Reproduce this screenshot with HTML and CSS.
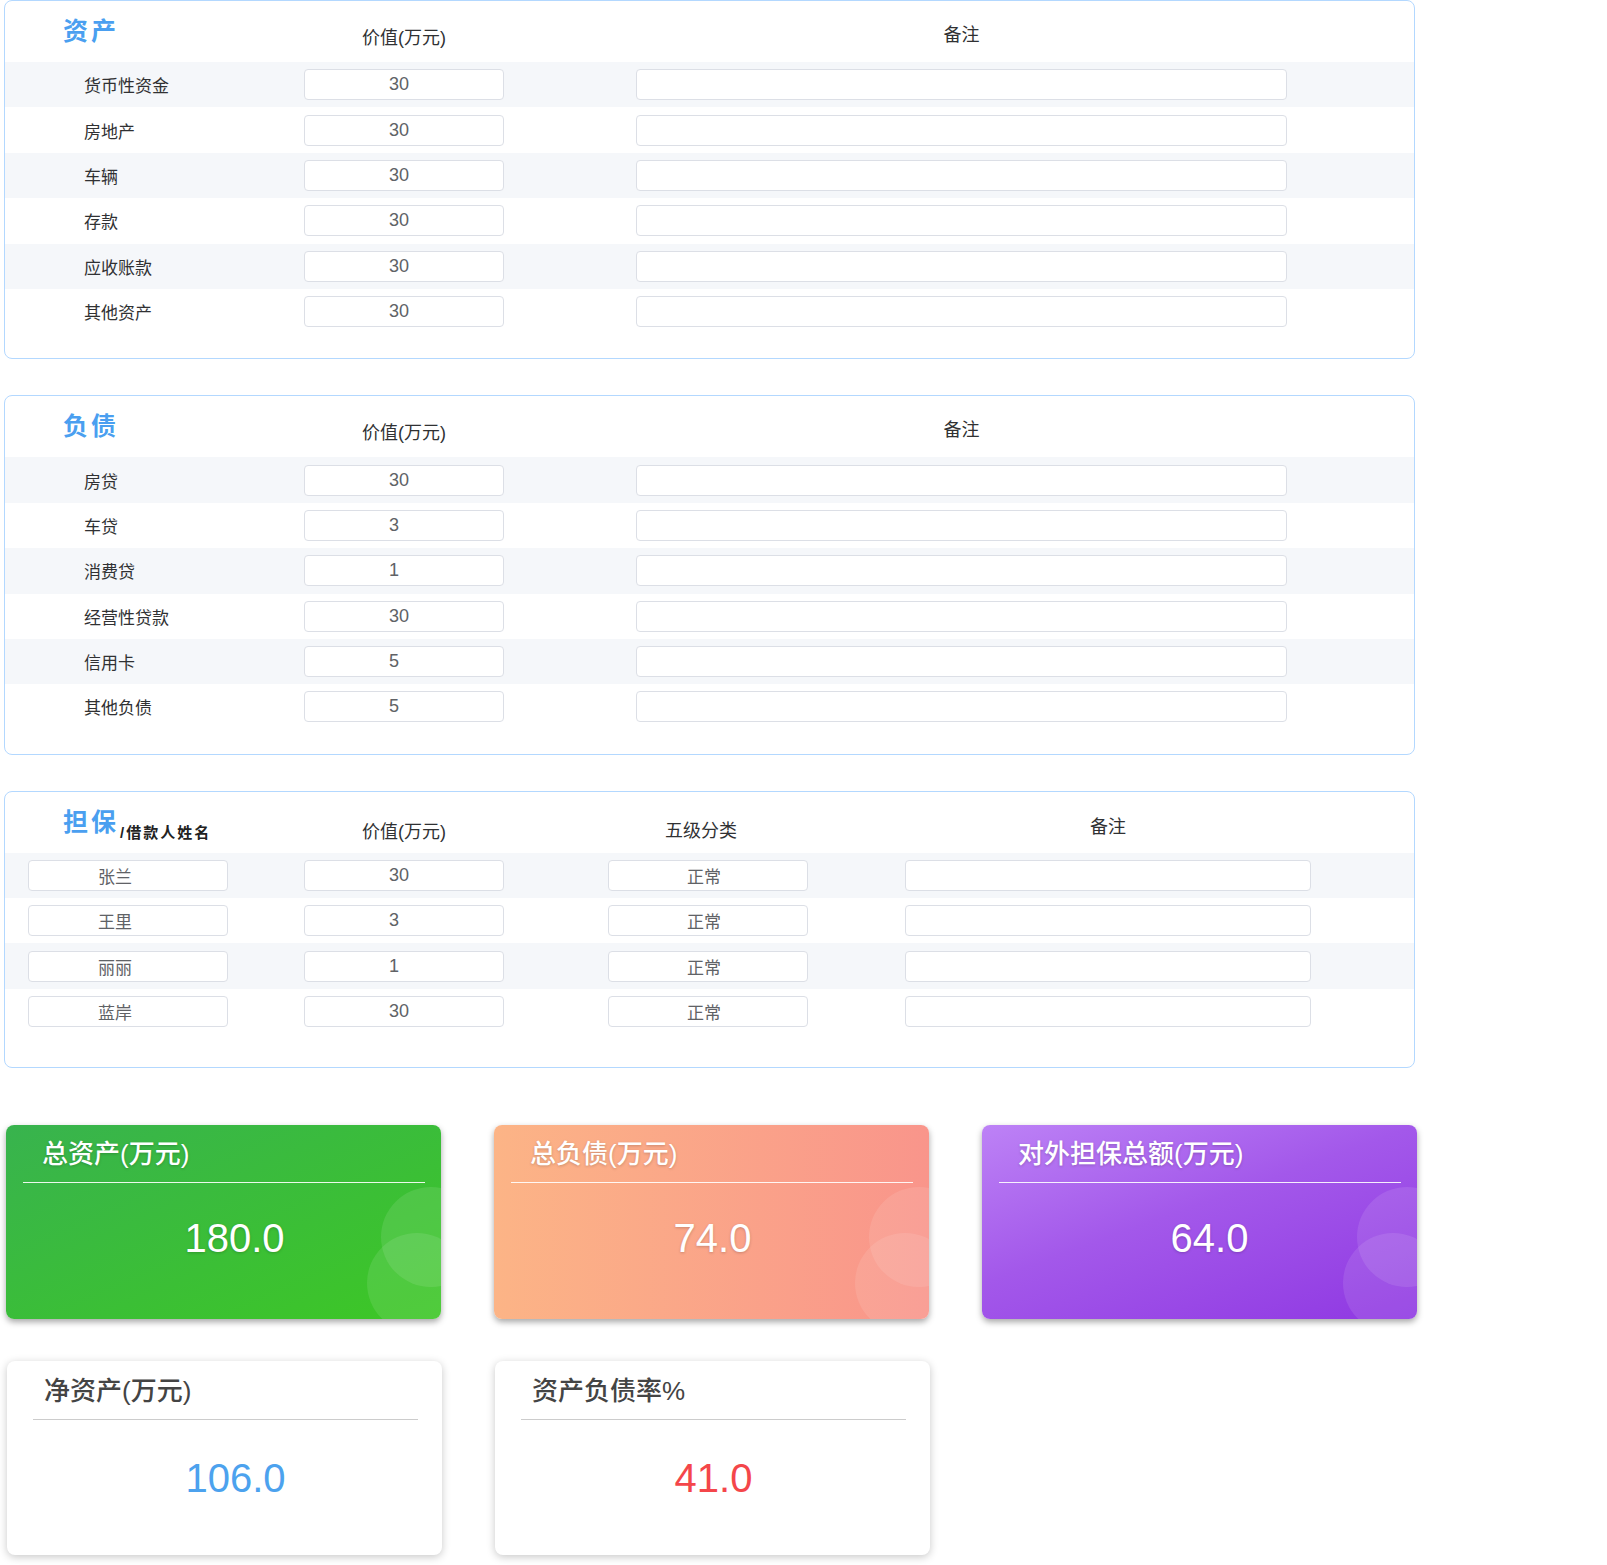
FILE: index.html
```html
<!DOCTYPE html>
<html>
  <head>
    <title>资产负债</title>
    <link rel="stylesheet" href="styles.css">
  </head>
  <body>
    <div class="page">
      <!-- 资产 -->
      <section class="panel">
        <div class="panel-head">
          <div class="panel-title">资产</div>
          <div class="col-head col-value">价值(万元)</div>
          <div class="col-head col-note">备注</div>
        </div>
        <div class="panel-row">
          <div class="row-label">货币性资金</div>
          <input class="field field-value" value="30">
          <input class="field field-note">
        </div>
        <div class="panel-row">
          <div class="row-label">房地产</div>
          <input class="field field-value" value="30">
          <input class="field field-note">
        </div>
        <div class="panel-row">
          <div class="row-label">车辆</div>
          <input class="field field-value" value="30">
          <input class="field field-note">
        </div>
        <div class="panel-row">
          <div class="row-label">存款</div>
          <input class="field field-value" value="30">
          <input class="field field-note">
        </div>
        <div class="panel-row">
          <div class="row-label">应收账款</div>
          <input class="field field-value" value="30">
          <input class="field field-note">
        </div>
        <div class="panel-row">
          <div class="row-label">其他资产</div>
          <input class="field field-value" value="30">
          <input class="field field-note">
        </div>
      </section>

      <!-- 负债 -->
      <section class="panel">
        <div class="panel-head">
          <div class="panel-title">负债</div>
          <div class="col-head col-value">价值(万元)</div>
          <div class="col-head col-note">备注</div>
        </div>
        <div class="panel-row">
          <div class="row-label">房贷</div>
          <input class="field field-value" value="30">
          <input class="field field-note">
        </div>
        <div class="panel-row">
          <div class="row-label">车贷</div>
          <input class="field field-value" value="3">
          <input class="field field-note">
        </div>
        <div class="panel-row">
          <div class="row-label">消费贷</div>
          <input class="field field-value" value="1">
          <input class="field field-note">
        </div>
        <div class="panel-row">
          <div class="row-label">经营性贷款</div>
          <input class="field field-value" value="30">
          <input class="field field-note">
        </div>
        <div class="panel-row">
          <div class="row-label">信用卡</div>
          <input class="field field-value" value="5">
          <input class="field field-note">
        </div>
        <div class="panel-row">
          <div class="row-label">其他负债</div>
          <input class="field field-value" value="5">
          <input class="field field-note">
        </div>
      </section>

      <!-- 担保 -->
      <section class="panel panel-guarantee">
        <div class="panel-head">
          <div class="panel-title">担保<span class="panel-sub">/借款人姓名</span></div>
          <div class="col-head col-value">价值(万元)</div>
          <div class="col-head col-grade">五级分类</div>
          <div class="col-head col-note">备注</div>
        </div>
        <div class="panel-row">
          <input class="field field-name" value="张兰">
          <input class="field field-value" value="30">
          <input class="field field-grade" value="正常">
          <input class="field field-note">
        </div>
        <div class="panel-row">
          <input class="field field-name" value="王里">
          <input class="field field-value" value="3">
          <input class="field field-grade" value="正常">
          <input class="field field-note">
        </div>
        <div class="panel-row">
          <input class="field field-name" value="丽丽">
          <input class="field field-value" value="1">
          <input class="field field-grade" value="正常">
          <input class="field field-note">
        </div>
        <div class="panel-row">
          <input class="field field-name" value="蓝岸">
          <input class="field field-value" value="30">
          <input class="field field-grade" value="正常">
          <input class="field field-note">
        </div>
      </section>

      <!-- 汇总 -->
      <div class="cards">
        <div class="card card-green">
          <div class="card-title">总资产(万元)</div>
          <div class="card-line"></div>
          <div class="card-value">180.0</div>
        </div>
        <div class="card card-orange">
          <div class="card-title">总负债(万元)</div>
          <div class="card-line"></div>
          <div class="card-value">74.0</div>
        </div>
        <div class="card card-purple">
          <div class="card-title">对外担保总额(万元)</div>
          <div class="card-line"></div>
          <div class="card-value">64.0</div>
        </div>
      </div>

      <div class="cards cards-plain">
        <div class="card card-white">
          <div class="card-title">净资产(万元)</div>
          <div class="card-line"></div>
          <div class="card-value value-blue">106.0</div>
        </div>
        <div class="card card-white">
          <div class="card-title">资产负债率%</div>
          <div class="card-line"></div>
          <div class="card-value value-red">41.0</div>
        </div>
      </div>
    </div>
  </body>
</html>
```

FILE: styles.css
```css
body {
  margin: 0;
  background-color: #ffffff;
  color: #303133;
  font-family: "Liberation Sans", "Noto Sans CJK SC", sans-serif;
}

.page {
  width: 1411px;
  padding: 0 0 20px 4px;
}

/* 面板 */
.panel {
  border: 1px solid #b3d8ff;
  border-radius: 8px;
  padding-bottom: 24px;
  margin-bottom: 36px;
}

.panel-head,
.panel-row {
  display: grid;
  grid-template-columns: 299px 332px 651px;
}

.panel-head {
  height: 61px;
}

.panel-title {
  padding: 18px 0 0 58px;
  font-size: 25px;
  line-height: 25px;
  font-weight: bold;
  letter-spacing: 3px;
  color: #4a9ff0;
  white-space: nowrap;
}

.panel-sub {
  position: relative;
  top: 7px;
  font-size: 15px;
  line-height: 15px;
  letter-spacing: 2px;
  color: #222;
  margin-left: 1px;
}

.col-head {
  font-size: 18px;
  line-height: 18px;
  text-align: center;
  color: #303133;
}

.col-value {
  width: 200px;
  padding-top: 28px;
}

.col-note {
  padding-top: 25px;
}

.panel-row {
  height: 45.4px;
  align-items: center;
}

.panel-row:nth-child(even) {
  background-color: #f5f7fa;
}

.row-label {
  padding-left: 79px;
  font-size: 17px;
  color: #303133;
}

.field {
  box-sizing: border-box;
  height: 31px;
  border: 1px solid #dcdfe6;
  border-radius: 4px;
  background-color: #fff;
  font: inherit;
  font-size: 18px;
  color: #606266;
  padding: 0;
  outline: none;
}

.field-value {
  width: 200px;
  padding-left: 84px;
}

.field-note {
  width: 651px;
}

/* 担保 */
.panel-guarantee {
  padding-bottom: 33px;
  margin-bottom: 57px;
}

.panel-guarantee .panel-head,
.panel-guarantee .panel-row {
  grid-template-columns: 299px 304px 297px 406px;
}

.panel-guarantee .col-value {
  padding-top: 31px;
}

.col-grade {
  width: 186px;
  padding-top: 30px;
}

.panel-guarantee .col-note {
  padding-top: 26px;
}

.field-name {
  width: 200px;
  margin-left: 23px;
  padding-left: 69px;
  font-size: 17px;
}

.field-grade {
  width: 200px;
  padding-left: 78px;
  font-size: 17px;
}

.panel-guarantee .field-note {
  width: 406px;
}

/* 卡片 */
.cards {
  display: grid;
  grid-template-columns: repeat(3, 435px);
  column-gap: 53px;
  margin-left: 2px;
}

.cards-plain {
  margin-top: 42px;
  margin-left: 3px;
}

.card {
  position: relative;
  height: 194px;
  border-radius: 8px;
  overflow: hidden;
  color: #fff;
  box-shadow: 0 3px 6px rgba(0, 0, 0, 0.35);
}

.card-title {
  padding: 16px 0 0 36px;
  font-size: 26px;
  line-height: 26px;
  font-weight: 500;
  text-shadow: 0 1px 3px rgba(0, 0, 0, 0.2);
}

.card-line {
  height: 1px;
  margin: 15px 16px 0 17px;
  background-color: rgba(255, 255, 255, 0.9);
}

.card-value {
  margin-top: 35px;
  padding-left: 22px;
  font-size: 40px;
  line-height: 40px;
  text-align: center;
  text-shadow: 0 1px 3px rgba(0, 0, 0, 0.2);
}

.card:nth-child(2) .card-value {
  padding-left: 2px;
}

.card:nth-child(3) .card-value {
  padding-left: 20px;
}

.card-green::before,
.card-green::after,
.card-orange::before,
.card-orange::after,
.card-purple::before,
.card-purple::after {
  content: "";
  position: absolute;
  width: 100px;
  height: 100px;
  border-radius: 50%;
  background-color: rgba(255, 255, 255, 0.1);
}

.card-green::before,
.card-orange::before,
.card-purple::before {
  top: 62px;
  right: -40px;
}

.card-green::after,
.card-orange::after,
.card-purple::after {
  top: 108px;
  right: -26px;
}

.card-green {
  background: linear-gradient(to right bottom, #38b34e, #3dc725);
}

.card-orange {
  background: linear-gradient(to right, #fcb486, #f9958b);
}

.card-purple {
  background: linear-gradient(160deg, #bd82f6 0%, #a358ea 45%, #8f38e2 100%);
}

.card-white {
  background-color: #fff;
  color: #444;
  box-shadow: 0 2px 8px rgba(0, 0, 0, 0.22);
}

.card-white .card-title {
  padding: 17px 0 0 37px;
  text-shadow: none;
}

.card-white .card-line {
  margin: 15px 24px 0 26px;
  background-color: #cccccc;
}

.card-white .card-value {
  margin-top: 38px;
  text-shadow: none;
}

.value-blue {
  color: #4ca2ee;
}

.value-red {
  color: #f4464a;
}
```
